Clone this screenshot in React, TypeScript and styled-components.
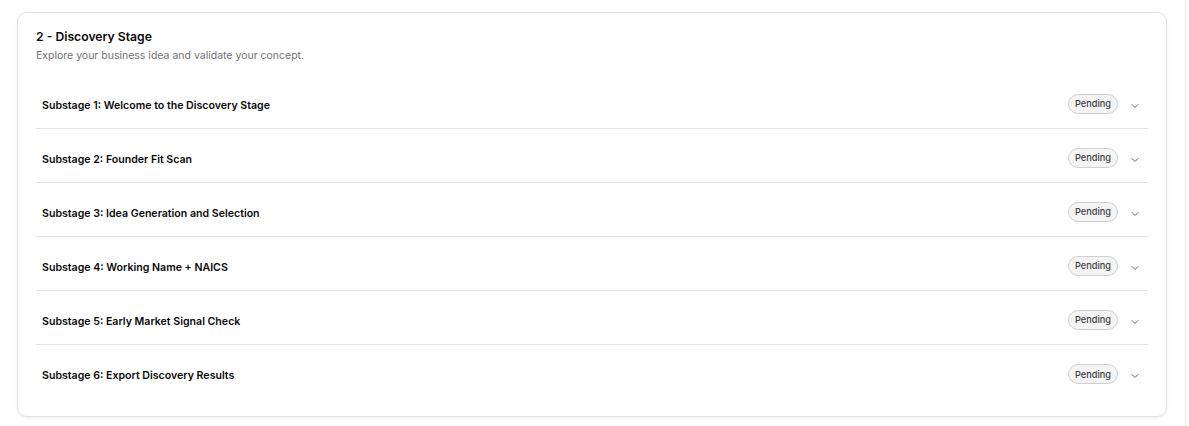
import styled, { createGlobalStyle } from "styled-components";
import { ChevronDown } from "lucide-react";

const substages = [
  "Substage 1: Welcome to the Discovery Stage",
  "Substage 2: Founder Fit Scan",
  "Substage 3: Idea Generation and Selection",
  "Substage 4: Working Name + NAICS",
  "Substage 5: Early Market Signal Check",
  "Substage 6: Export Discovery Results",
];

const GlobalStyle = createGlobalStyle`
  html, body {
    margin: 0;
    padding: 0;
    background: #ffffff;
  }
  body {
    font-family: Inter, "Noto Sans", "Liberation Sans", sans-serif;
    color: #0a0a0a;
    -webkit-font-smoothing: antialiased;
  }
`;

const Main = styled.main`
  box-sizing: border-box;
  width: 1186px;
  height: 426px;
  padding: 12px 18px 0 17px;
  border-right: 1px solid #e8e8e8;
`;

const Card = styled.section`
  box-sizing: border-box;
  border: 1px solid #e3e3e3;
  border-radius: 10px;
  background: #ffffff;
  box-shadow: 0 1px 3px rgba(0, 0, 0, 0.07);
  padding: 16px 18px 17px;
`;

const Title = styled.h2`
  margin: 0;
  font-size: 12.2px;
  line-height: 16px;
  font-weight: 600;
  color: #0a0a0a;
`;

const Subtitle = styled.p`
  margin: 3px 0 0;
  font-size: 10.5px;
  line-height: 16px;
  color: #737373;
`;

const List = styled.div`
  margin-top: 11px;
  display: flex;
  flex-direction: column;
`;

const Row = styled.div<{ $last?: boolean }>`
  box-sizing: border-box;
  height: 54px;
  display: flex;
  align-items: center;
  padding: 2px 7px 0 6px;
  border-bottom: ${({ $last }) => ($last ? "none" : "1px solid #e5e5e5")};
`;

const RowLabel = styled.span`
  flex: 1;
  font-size: 10.6px;
  font-weight: 600;
  color: #0a0a0a;
  padding-top: 5px;
`;

const Badge = styled.span`
  box-sizing: border-box;
  display: inline-flex;
  align-items: center;
  height: 20px;
  margin-top: 2px;
  padding: 0 6px;
  border: 1px solid #d0d0d0;
  border-radius: 9999px;
  background: #f4f4f4;
  font-size: 9.2px;
  font-weight: 500;
  color: #404040;
`;

const Chevron = styled(ChevronDown)`
  margin-left: 11px;
  margin-top: 6px;
  color: #666666;
`;

export default function App() {
  return (
    <>
      <GlobalStyle />
      <Main>
        <Card>
          <Title>2 - Discovery Stage</Title>
          <Subtitle>Explore your business idea and validate your concept.</Subtitle>
          <List>
            {substages.map((label, i) => (
              <Row key={i} $last={i === substages.length - 1}>
                <RowLabel>{label}</RowLabel>
                <Badge>Pending</Badge>
                <Chevron size={12} strokeWidth={2} />
              </Row>
            ))}
          </List>
        </Card>
      </Main>
    </>
  );
}
